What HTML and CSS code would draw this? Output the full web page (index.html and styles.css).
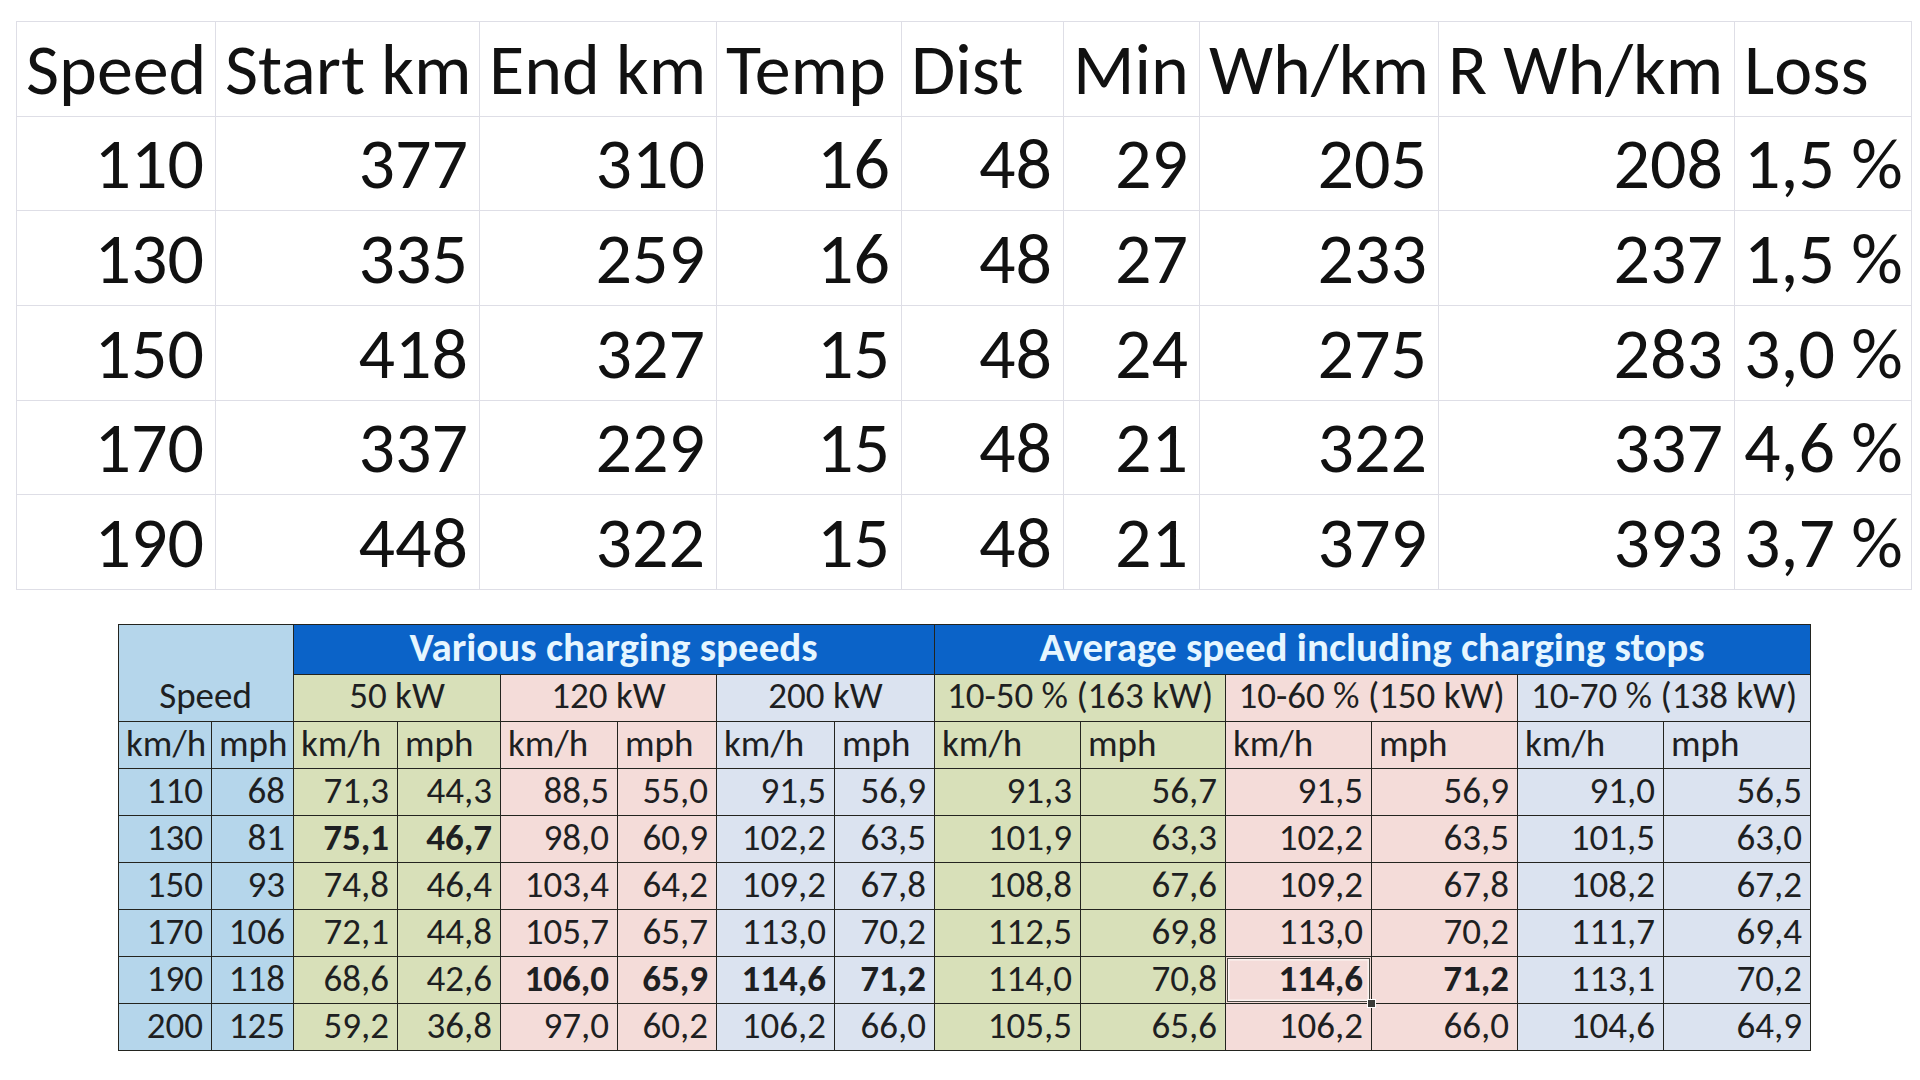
FILE: index.html
```html
<!DOCTYPE html>
<html lang="en">
<head>
<meta charset="utf-8">
<title>Speed tests</title>
<link rel="stylesheet" href="styles.css">
</head>
<body>
<main class="page">
  <table class="big">
    <colgroup>
      <col class="c1"><col class="c2"><col class="c3"><col class="c4"><col class="c5"><col class="c6"><col class="c7"><col class="c8"><col class="c9">
    </colgroup>
    <thead>
      <tr><th>Speed</th><th>Start km</th><th>End km</th><th>Temp</th><th>Dist</th><th class="r">Min</th><th>Wh/km</th><th>R Wh/km</th><th>Loss</th></tr>
    </thead>
    <tbody>
      <tr><td>110</td><td>377</td><td>310</td><td>16</td><td>48</td><td>29</td><td>205</td><td>208</td><td>1,5 %</td></tr>
      <tr><td>130</td><td>335</td><td>259</td><td>16</td><td>48</td><td>27</td><td>233</td><td>237</td><td>1,5 %</td></tr>
      <tr><td>150</td><td>418</td><td>327</td><td>15</td><td>48</td><td>24</td><td>275</td><td>283</td><td>3,0 %</td></tr>
      <tr><td>170</td><td>337</td><td>229</td><td>15</td><td>48</td><td>21</td><td>322</td><td>337</td><td>4,6 %</td></tr>
      <tr><td>190</td><td>448</td><td>322</td><td>15</td><td>48</td><td>21</td><td>379</td><td>393</td><td>3,7 %</td></tr>
    </tbody>
  </table>

  <table class="charge">
    <colgroup>
      <col class="k1"><col class="k2"><col class="k3"><col class="k4"><col class="k5"><col class="k6"><col class="k7"><col class="k8"><col class="k9"><col class="k10"><col class="k11"><col class="k12"><col class="k13"><col class="k14">
    </colgroup>
    <thead>
      <tr class="titles">
        <th class="sp speedhead" colspan="2" rowspan="2">Speed</th>
        <th class="title" colspan="6">Various charging speeds</th>
        <th class="title" colspan="6">Average speed including charging stops</th>
      </tr>
      <tr class="groups">
        <th class="g" colspan="2">50 kW</th>
        <th class="p" colspan="2">120 kW</th>
        <th class="b" colspan="2">200 kW</th>
        <th class="g" colspan="2">10-50 % (163 kW)</th>
        <th class="p" colspan="2">10-60 % (150 kW)</th>
        <th class="b" colspan="2">10-70 % (138 kW)</th>
      </tr>
      <tr class="units">
        <th class="sp">km/h</th><th class="sp">mph</th>
        <th class="g">km/h</th><th class="g">mph</th>
        <th class="p">km/h</th><th class="p">mph</th>
        <th class="b">km/h</th><th class="b">mph</th>
        <th class="g">km/h</th><th class="g">mph</th>
        <th class="p">km/h</th><th class="p">mph</th>
        <th class="b">km/h</th><th class="b">mph</th>
      </tr>
    </thead>
    <tbody>
      <tr>
        <td class="sp">110</td><td class="sp">68</td>
        <td class="g">71,3</td><td class="g">44,3</td>
        <td class="p">88,5</td><td class="p">55,0</td>
        <td class="b">91,5</td><td class="b">56,9</td>
        <td class="g">91,3</td><td class="g">56,7</td>
        <td class="p">91,5</td><td class="p">56,9</td>
        <td class="b">91,0</td><td class="b">56,5</td>
      </tr>
      <tr>
        <td class="sp">130</td><td class="sp">81</td>
        <td class="g strong">75,1</td><td class="g strong">46,7</td>
        <td class="p">98,0</td><td class="p">60,9</td>
        <td class="b">102,2</td><td class="b">63,5</td>
        <td class="g">101,9</td><td class="g">63,3</td>
        <td class="p">102,2</td><td class="p">63,5</td>
        <td class="b">101,5</td><td class="b">63,0</td>
      </tr>
      <tr>
        <td class="sp">150</td><td class="sp">93</td>
        <td class="g">74,8</td><td class="g">46,4</td>
        <td class="p">103,4</td><td class="p">64,2</td>
        <td class="b">109,2</td><td class="b">67,8</td>
        <td class="g">108,8</td><td class="g">67,6</td>
        <td class="p">109,2</td><td class="p">67,8</td>
        <td class="b">108,2</td><td class="b">67,2</td>
      </tr>
      <tr>
        <td class="sp">170</td><td class="sp">106</td>
        <td class="g">72,1</td><td class="g">44,8</td>
        <td class="p">105,7</td><td class="p">65,7</td>
        <td class="b">113,0</td><td class="b">70,2</td>
        <td class="g">112,5</td><td class="g">69,8</td>
        <td class="p">113,0</td><td class="p">70,2</td>
        <td class="b">111,7</td><td class="b">69,4</td>
      </tr>
      <tr>
        <td class="sp">190</td><td class="sp">118</td>
        <td class="g">68,6</td><td class="g">42,6</td>
        <td class="p strong">106,0</td><td class="p strong">65,9</td>
        <td class="b strong">114,6</td><td class="b strong">71,2</td>
        <td class="g">114,0</td><td class="g">70,8</td>
        <td class="p strong selected">114,6<span class="handle"></span></td><td class="p strong">71,2</td>
        <td class="b">113,1</td><td class="b">70,2</td>
      </tr>
      <tr>
        <td class="sp">200</td><td class="sp">125</td>
        <td class="g">59,2</td><td class="g">36,8</td>
        <td class="p">97,0</td><td class="p">60,2</td>
        <td class="b">106,2</td><td class="b">66,0</td>
        <td class="g">105,5</td><td class="g">65,6</td>
        <td class="p">106,2</td><td class="p">66,0</td>
        <td class="b">104,6</td><td class="b">64,9</td>
      </tr>
    </tbody>
  </table>
</main>
</body>
</html>
```

FILE: styles.css
```css
html, body {
  margin: 0;
  padding: 0;
  background: #ffffff;
}

.page {
  width: 1920px;
  height: 1080px;
  display: flex;
  flex-direction: column;
  align-items: flex-start;
  overflow: hidden;
  font-family: Carlito, Calibri, Lato, sans-serif;
}

/* ---------- top table ---------- */
.big {
  margin: 21px 0 0 16px;
  width: 1895px;
  border-collapse: collapse;
  table-layout: fixed;
  color: #111111;
}
.big .c1 { width: 199px; }
.big .c2 { width: 264px; }
.big .c3 { width: 237px; }
.big .c4 { width: 185px; }
.big .c5 { width: 162px; }
.big .c6 { width: 136px; }
.big .c7 { width: 239px; }
.big .c8 { width: 296px; }
.big .c9 { width: 177px; }

.big th,
.big td {
  height: 94.7px;
  box-sizing: border-box;
  border: 1.5px solid #dedee6;
  font-size: 72px;
  font-weight: 400;
  line-height: 72px;
  vertical-align: bottom;
  padding: 0 11px 11px 9px;
  white-space: nowrap;
  overflow: hidden;
}
.big th { text-align: left; }
.big th.r { text-align: right; }
.big td { text-align: right; }
.big td:last-child { text-align: left; }

/* ---------- charging table ---------- */
.charge {
  margin: 34px 0 0 118px;
  width: 1692px;
  border-collapse: collapse;
  table-layout: fixed;
  color: #1e1f22;
}
.charge .k1 { width: 93px; }
.charge .k2 { width: 82px; }
.charge .k3 { width: 104px; }
.charge .k4 { width: 103px; }
.charge .k5 { width: 117px; }
.charge .k6 { width: 99px; }
.charge .k7 { width: 118px; }
.charge .k8 { width: 100px; }
.charge .k9 { width: 146px; }
.charge .k10 { width: 145px; }
.charge .k11 { width: 146px; }
.charge .k12 { width: 146px; }
.charge .k13 { width: 146px; }
.charge .k14 { width: 147px; }

.charge th,
.charge td {
  height: 47px;
  box-sizing: border-box;
  border: 1.5px solid #23241f;
  font-size: 37px;
  font-weight: 400;
  line-height: 37px;
  vertical-align: bottom;
  padding: 0 8px 6px 7px;
  white-space: nowrap;
  overflow: hidden;
}
.charge td { text-align: right; }
.charge .units th { text-align: left; }
.charge .groups th { text-align: center; padding-left: 0; padding-right: 0; padding-bottom: 7px; }
.charge th.speedhead { text-align: center; padding-bottom: 7px; }

.charge .title {
  background: #0b63c8;
  color: #e6f6ff;
  font-weight: 700;
  font-size: 41px;
  line-height: 44px;
  text-align: center;
  padding-bottom: 5px;
  overflow: visible;
}

.charge td.strong { font-weight: 700; }

.sp { background: #b5d6eb; }
.g  { background: #d8e0b9; }
.p  { background: #f4dcd9; }
.b  { background: #dbe3f0; }

/* Excel-style active cell */
.charge td.selected {
  position: relative;
  overflow: visible;
}
.charge td.selected::after {
  content: "";
  position: absolute;
  inset: 1px;
  border: 1.5px solid #4c4a44;
  box-shadow: inset 0 0 0 1.5px #fbf3f1;
  pointer-events: none;
}
.handle {
  position: absolute;
  right: -5px;
  bottom: -5px;
  width: 7px;
  height: 7px;
  background: #3a3a36;
  border: 1.5px solid #ffffff;
  z-index: 2;
}
```
